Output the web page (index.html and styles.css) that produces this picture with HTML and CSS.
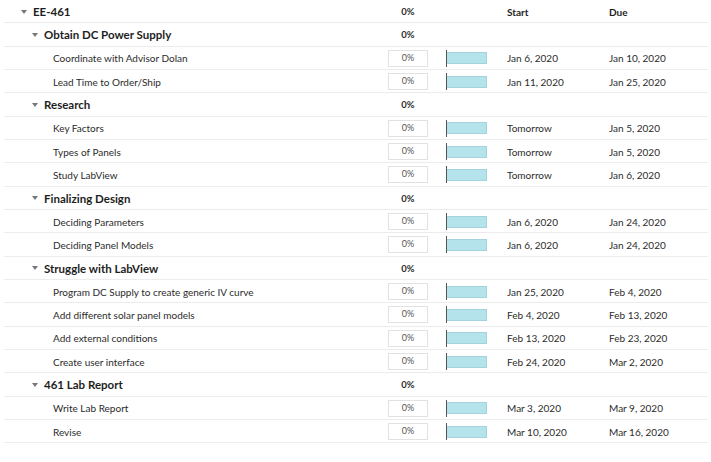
FILE: index.html
```html
<!DOCTYPE html>
<html lang="en">
<head>
    <meta charset="UTF-8">
    <title>EE-461 Timeline</title>
    <link rel="stylesheet" href="styles.css">
</head>
<body>
    <div class="plan">
      <div class="row project">
          <div class="name"><span class="caret"></span>EE-461</div>
          <div class="pct">0%</div>
          <div></div>
          <div class="col-head">Start</div>
          <div class="col-head">Due</div>
      </div>

      <!-- Obtain DC Power Supply -->
      <div class="row section">
          <div class="name"><span class="caret"></span>Obtain DC Power Supply</div>
          <div class="pct">0%</div>
      </div>
      <div class="row task">
          <div class="name">Coordinate with Advisor Dolan</div>
          <div class="pct"><span class="pct-box">0%</span></div>
          <div class="bar"><span></span></div>
          <div class="date">Jan 6, 2020</div>
          <div class="date">Jan 10, 2020</div>
      </div>
      <div class="row task">
          <div class="name">Lead Time to Order/Ship</div>
          <div class="pct"><span class="pct-box">0%</span></div>
          <div class="bar"><span></span></div>
          <div class="date">Jan 11, 2020</div>
          <div class="date">Jan 25, 2020</div>
      </div>

      <!-- Research -->
      <div class="row section">
          <div class="name"><span class="caret"></span>Research</div>
          <div class="pct">0%</div>
      </div>
      <div class="row task">
          <div class="name">Key Factors</div>
          <div class="pct"><span class="pct-box">0%</span></div>
          <div class="bar"><span></span></div>
          <div class="date">Tomorrow</div>
          <div class="date">Jan 5, 2020</div>
      </div>
      <div class="row task">
          <div class="name">Types of Panels</div>
          <div class="pct"><span class="pct-box">0%</span></div>
          <div class="bar"><span></span></div>
          <div class="date">Tomorrow</div>
          <div class="date">Jan 5, 2020</div>
      </div>
      <div class="row task">
          <div class="name">Study LabView</div>
          <div class="pct"><span class="pct-box">0%</span></div>
          <div class="bar"><span></span></div>
          <div class="date">Tomorrow</div>
          <div class="date">Jan 6, 2020</div>
      </div>

      <!-- Finalizing Design -->
      <div class="row section">
          <div class="name"><span class="caret"></span>Finalizing Design</div>
          <div class="pct">0%</div>
      </div>
      <div class="row task">
          <div class="name">Deciding Parameters</div>
          <div class="pct"><span class="pct-box">0%</span></div>
          <div class="bar"><span></span></div>
          <div class="date">Jan 6, 2020</div>
          <div class="date">Jan 24, 2020</div>
      </div>
      <div class="row task">
          <div class="name">Deciding Panel Models</div>
          <div class="pct"><span class="pct-box">0%</span></div>
          <div class="bar"><span></span></div>
          <div class="date">Jan 6, 2020</div>
          <div class="date">Jan 24, 2020</div>
      </div>

      <!-- Struggle with LabView -->
      <div class="row section">
          <div class="name"><span class="caret"></span>Struggle with LabView</div>
          <div class="pct">0%</div>
      </div>
      <div class="row task">
          <div class="name">Program DC Supply to create generic IV curve</div>
          <div class="pct"><span class="pct-box">0%</span></div>
          <div class="bar"><span></span></div>
          <div class="date">Jan 25, 2020</div>
          <div class="date">Feb 4, 2020</div>
      </div>
      <div class="row task">
          <div class="name">Add different solar panel models</div>
          <div class="pct"><span class="pct-box">0%</span></div>
          <div class="bar"><span></span></div>
          <div class="date">Feb 4, 2020</div>
          <div class="date">Feb 13, 2020</div>
      </div>
      <div class="row task">
          <div class="name">Add external conditions</div>
          <div class="pct"><span class="pct-box">0%</span></div>
          <div class="bar"><span></span></div>
          <div class="date">Feb 13, 2020</div>
          <div class="date">Feb 23, 2020</div>
      </div>
      <div class="row task">
          <div class="name">Create user interface</div>
          <div class="pct"><span class="pct-box">0%</span></div>
          <div class="bar"><span></span></div>
          <div class="date">Feb 24, 2020</div>
          <div class="date">Mar 2, 2020</div>
      </div>

      <!-- 461 Lab Report -->
      <div class="row section">
          <div class="name"><span class="caret"></span>461 Lab Report</div>
          <div class="pct">0%</div>
      </div>
      <div class="row task">
          <div class="name">Write Lab Report</div>
          <div class="pct"><span class="pct-box">0%</span></div>
          <div class="bar"><span></span></div>
          <div class="date">Mar 3, 2020</div>
          <div class="date">Mar 9, 2020</div>
      </div>
      <div class="row task">
          <div class="name">Revise</div>
          <div class="pct"><span class="pct-box">0%</span></div>
          <div class="bar"><span></span></div>
          <div class="date">Mar 10, 2020</div>
          <div class="date">Mar 16, 2020</div>
      </div>
    </div>
</body>
</html>
```

FILE: styles.css
```css
  body {
      font-family: Lato, "Open Sans", Arial, sans-serif;
      background-color: #fff;
      color: #2b2b2b;
      margin: 0;
  }

  .plan {
      width: 711px;
  }

  /* one line of the plan; separator drawn from 4px to the right edge */
  .row {
      display: grid;
      grid-template-columns: 388px 40px 79px 102px 1fr;
      align-items: center;
      height: 23.33px;
      font-size: 10px;
      background: linear-gradient(#ececec, #ececec) 4px 100% / 704px 1px no-repeat;
  }

  .name {
      display: flex;
      align-items: center;
      white-space: nowrap;
  }

  .project .name,
  .section .name {
      font-size: 11.5px;
      font-weight: 700;
      color: #1e1e1e;
  }

  .project .name {
      padding-left: 21px;
  }

  .section .name {
      padding-left: 32px;
  }

  .task .name {
      padding-left: 53px;
  }

  .caret {
      width: 0;
      height: 0;
      border-left: 3px solid transparent;
      border-right: 3px solid transparent;
      border-top: 4px solid #777;
      margin-right: 6px;
  }

  .pct {
      text-align: center;
      font-size: 10px;
  }

  .project .pct,
  .section .pct {
      font-weight: 700;
      font-size: 9.5px;
  }

  .pct-box {
      display: block;
      height: 15px;
      line-height: 14px;
      border: 1px solid #e2e2e2;
      color: #555;
      font-size: 9px;
  }

  .bar {
      display: flex;
      align-items: center;
      height: 17px;
      margin-left: 18px;
      border-left: 1px solid #555;
  }

  .bar span {
      display: block;
      width: 40px;
      height: 12px;
      background-color: #b4e3ec;
      border: 1px solid #a3d4de;
      border-left: none;
      box-sizing: border-box;
  }

  .col-head {
      font-weight: 700;
      font-size: 10px;
      color: #1e1e1e;
  }

  .date {
      font-size: 10px;
  }
```
